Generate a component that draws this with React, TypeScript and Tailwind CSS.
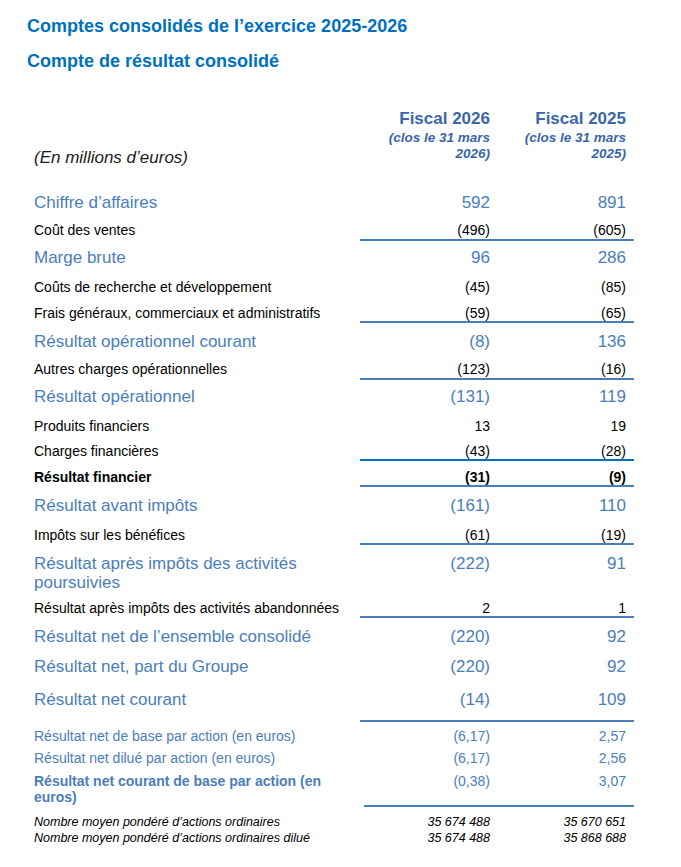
import React from 'react';

type Kind = 'lg' | 'lg2' | 'sm' | 'smb' | 'md' | 'mdb' | 'xs';

interface Row {
	label: React.ReactNode;
	a: string;
	b: string;
	kind: Kind;
	h: string;
	p: string;
	line?: string;
	shift?: boolean;
}

const blueLine = 'border-b-2 border-[#4a7ebb]';

const rows: Row[] = [
	{ label: 'Chiffre d’affaires', a: '592', b: '891', kind: 'lg', h: 'h-[28px]', p: 'pt-[5px]' },
	{ label: 'Coût des ventes', a: '(496)', b: '(605)', kind: 'sm', h: 'h-[25px]', p: 'pt-[6px]', line: blueLine },
	{ label: 'Marge brute', a: '96', b: '286', kind: 'lg', h: 'h-[35px]', p: 'pt-[7px]' },
	{ label: 'Coûts de recherche et développement', a: '(45)', b: '(85)', kind: 'sm', h: 'h-[26px]', p: 'pt-[3px]' },
	{ label: 'Frais généraux, commerciaux et administratifs', a: '(59)', b: '(65)', kind: 'sm', h: 'h-[21px]', p: 'pt-[3px]', line: blueLine },
	{ label: 'Résultat opérationnel courant', a: '(8)', b: '136', kind: 'lg', h: 'h-[33px]', p: 'pt-[9px]' },
	{ label: 'Autres charges opérationnelles', a: '(123)', b: '(16)', kind: 'sm', h: 'h-[24px]', p: 'pt-[5px]', line: blueLine },
	{ label: 'Résultat opérationnel', a: '(131)', b: '119', kind: 'lg', h: 'h-[34px]', p: 'pt-[7px]' },
	{ label: 'Produits financiers', a: '13', b: '19', kind: 'sm', h: 'h-[26px]', p: 'pt-[4px]' },
	{ label: 'Charges financières', a: '(43)', b: '(28)', kind: 'sm', h: 'h-[21px]', p: 'pt-[3px]', line: 'border-b-2 border-[#0070c0]' },
	{ label: 'Résultat financier', a: '(31)', b: '(9)', kind: 'smb', h: 'h-[26px]', p: 'pt-[8px]', line: blueLine },
	{ label: 'Résultat avant impôts', a: '(161)', b: '110', kind: 'lg', h: 'h-[35px]', p: 'pt-[9px]' },
	{ label: 'Impôts sur les bénéfices', a: '(61)', b: '(19)', kind: 'sm', h: 'h-[23px]', p: 'pt-[5px]', line: blueLine },
	{
		label: (
			<>
				Résultat après impôts des activités
				<br />
				poursuivies
			</>
		),
		a: '(222)',
		b: '91',
		kind: 'lg2',
		h: 'h-[52px]',
		p: 'pt-[9px]',
	},
	{ label: 'Résultat après impôts des activités abandonnées', a: '2', b: '1', kind: 'sm', h: 'h-[21px]', p: 'pt-[3px]', line: blueLine },
	{ label: 'Résultat net de l’ensemble consolidé', a: '(220)', b: '92', kind: 'lg', h: 'h-[34px]', p: 'pt-[9px]' },
	{ label: 'Résultat net, part du Groupe', a: '(220)', b: '92', kind: 'lg', h: 'h-[32px]', p: 'pt-[5px]' },
	{ label: 'Résultat net courant', a: '(14)', b: '109', kind: 'lg', h: 'h-[38px]', p: 'pt-[6px]', line: blueLine },
	{ label: 'Résultat net de base par action (en euros)', a: '(6,17)', b: '2,57', kind: 'md', h: 'h-[25px]', p: 'pt-[5px]' },
	{ label: 'Résultat net dilué par action (en euros)', a: '(6,17)', b: '2,56', kind: 'md', h: 'h-[23px]', p: 'pt-[2px]' },
	{
		label: (
			<>
				Résultat net courant de base par action (en
				<br />
				euros)
			</>
		),
		a: '(0,38)',
		b: '3,07',
		kind: 'mdb',
		h: 'h-[37px]',
		p: 'pt-[3px]',
		line: blueLine,
		shift: true,
	},
	{ label: 'Nombre moyen pondéré d’actions ordinaires', a: '35 674 488', b: '35 670 651', kind: 'xs', h: 'h-[23px]', p: 'pt-[7px]' },
	{ label: 'Nombre moyen pondéré d’actions ordinaires dilué', a: '35 674 488', b: '35 868 688', kind: 'xs', h: 'h-[16px]', p: 'pt-0' },
];

const labelStyle: Record<Kind, string> = {
	lg: 'text-[17px] leading-[20px] text-[#4a7ebb]',
	lg2: 'text-[17px] leading-[19px] text-[#4a7ebb]',
	sm: 'text-[14px] leading-[16px] text-black',
	smb: 'text-[14px] leading-[16px] text-black font-bold',
	md: 'text-[14px] leading-[18px] text-[#4a7ebb]',
	mdb: 'text-[14px] leading-[16px] text-[#4a7ebb] font-bold',
	xs: 'text-[12.5px] leading-[16px] text-black italic',
};

const valueStyle: Record<Kind, string> = {
	lg: 'text-[17px] leading-[20px] text-[#4a7ebb]',
	lg2: 'text-[17px] leading-[19px] text-[#4a7ebb]',
	sm: 'text-[14px] leading-[16px] text-black',
	smb: 'text-[14px] leading-[16px] text-black font-bold',
	md: 'text-[14px] leading-[18px] text-[#4a7ebb]',
	mdb: 'text-[14px] leading-[16px] text-[#4a7ebb]',
	xs: 'text-[12.5px] leading-[16px] text-black italic',
};

const TableRow: React.FC<{ row: Row }> = ({ row }) => {
	const line = row.line ?? '';
	return (
		<div className={`flex ${row.h}`}>
			<div className={`w-[326px] ${row.p} ${labelStyle[row.kind]}`}>{row.label}</div>
			<div
				className={`
          ${row.shift ? 'ml-[4px] w-[134px]' : 'w-[138px]'}
          h-full box-border pr-2 text-right
          ${row.p} ${line} ${valueStyle[row.kind]}
        `}
			>
				{row.a}
			</div>
			<div className={`w-[136px] h-full box-border pr-2 text-right ${row.p} ${line} ${valueStyle[row.kind]}`}>
				{row.b}
			</div>
		</div>
	);
};

export default function App() {
	return (
		<div className="min-h-screen w-[681px] bg-white font-['Liberation_Sans',Arial,sans-serif]">
			<div className="pl-[27px] pt-[15px] text-[#0070c0] font-bold text-[18px] leading-[22px]">
				<h1>Comptes consolidés de l’exercice 2025-2026</h1>
				<h2 className="mt-[13px]">Compte de résultat consolidé</h2>
			</div>

			<div className="pl-[34px]">
				{/* en-tête des colonnes */}
				<div className="mt-[36px] flex h-[60px]">
					<div className="w-[326px] self-end text-[17px] leading-[20px] italic text-[#1a1a1a]">
						(En millions d’euros)
					</div>
					<div className="w-[138px] pr-2 text-right text-[#3b66a8]">
						<div className="text-[17px] leading-[22px] font-bold">Fiscal 2026</div>
						<div className="text-[13.5px] leading-[16px] font-bold italic">
							(clos le 31 mars
							<br />
							2026)
						</div>
					</div>
					<div className="w-[136px] pr-2 text-right text-[#3b66a8]">
						<div className="text-[17px] leading-[22px] font-bold">Fiscal 2025</div>
						<div className="text-[13.5px] leading-[16px] font-bold italic">
							(clos le 31 mars
							<br />
							2025)
						</div>
					</div>
				</div>

				<div className="mt-[20px]">
					{rows.map((r, i) => (
						<TableRow key={i} row={r} />
					))}
				</div>
			</div>
		</div>
	);
}
